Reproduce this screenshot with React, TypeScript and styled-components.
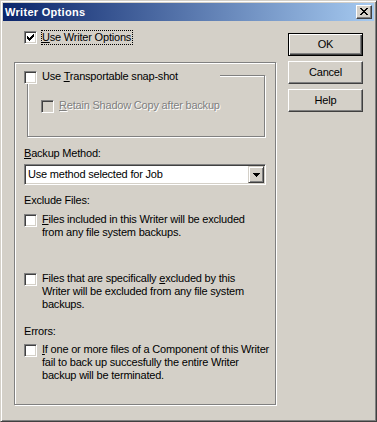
import React from "react";
import styled, { createGlobalStyle } from "styled-components";

const Global = createGlobalStyle`
  html, body { margin: 0; padding: 0; background: #d4d0c8; }
  body {
    font-family: "Liberation Sans", Arial, sans-serif;
    font-size: 11px;
    letter-spacing: -0.2px;
    color: #000;
  }
`;

const Window = styled.div`
  box-sizing: border-box;
  width: 377px;
  height: 422px;
  background: #d4d0c8;
  border: 1px solid;
  border-color: #d4d0c8 #404040 #404040 #d4d0c8;
  box-shadow: inset 1px 1px #fff, inset -1px -1px #808080;
  padding: 2px;
  display: flex;
  flex-direction: column;
`;

const TitleBar = styled.div`
  height: 18px;
  flex: none;
  background: linear-gradient(to right, #0a246a, #a6caf0);
  display: flex;
  align-items: center;
  justify-content: space-between;
  padding: 0 2px 0 2px;
`;

const TitleText = styled.span`
  color: #fff;
  font-weight: bold;
  font-size: 11px;
  letter-spacing: 0.3px;
  line-height: 13px;
`;

const CaptionButton = styled.div`
  box-sizing: border-box;
  width: 16px;
  height: 14px;
  background: #d4d0c8;
  border: 1px solid;
  border-color: #fff #404040 #404040 #fff;
  box-shadow: inset -1px -1px #808080;
  display: flex;
  padding: 2px 0 0 3px;
`;

const Body = styled.div`
  display: flex;
  padding: 9px 0 0 11px;
`;

const LeftCol = styled.div`
  width: 263px;
  display: flex;
  flex-direction: column;
`;

const RightCol = styled.div`
  margin-left: 11px;
  margin-top: 3px;
  display: flex;
  flex-direction: column;
  gap: 5px;
`;

const PushButton = styled.button<{ $default?: boolean }>`
  box-sizing: border-box;
  width: 75px;
  height: 23px;
  padding: 0;
  margin: 0;
  font-family: inherit;
  font-size: 11px;
  letter-spacing: -0.2px;
  color: #000;
  background: #d4d0c8;
  border: 1px solid;
  border-color: ${(p) => (p.$default ? "#000" : "#fff #404040 #404040 #fff")};
  box-shadow: ${(p) =>
    p.$default
      ? "inset 1px 1px #fff, inset -1px -1px #404040, inset -2px -2px #808080"
      : "inset -1px -1px #808080"};
  line-height: 13px;
`;

const TopRow = styled.div`
  display: flex;
  align-items: flex-start;
  margin-left: 10px;
`;

const FocusLabel = styled.span`
  margin-left: 4px;
  border: 1px dotted #000;
  line-height: 13px;
  padding: 0 1px 0 0;
`;

const Frame = styled.div`
  box-sizing: border-box;
  width: 262px;
  height: 343px;
  margin-top: 17px;
  border: 1px solid #808080;
  box-shadow: inset 1px 1px #fff, 1px 1px #fff;
  padding: 12px 0 0 9px;
  display: flex;
  flex-direction: column;
`;

const GroupBox = styled.div`
  position: relative;
  box-sizing: border-box;
  width: 238px;
  height: 62px;
  margin-left: 3px;
  border: 1px solid #808080;
  box-shadow: inset 1px 1px #fff, 1px 1px #fff;
  padding: 23px 0 0 13px;
`;

const Legend = styled.div`
  position: absolute;
  left: -4px;
  top: -6px;
  width: 196px;
  height: 14px;
  background: #d4d0c8;
  display: flex;
  align-items: flex-start;
`;

const CheckRow = styled.div<{ $top?: number }>`
  display: flex;
  align-items: flex-start;
  margin-top: ${(p) => p.$top ?? 0}px;
`;

const CheckText = styled.span<{ $disabled?: boolean }>`
  margin-left: 5px;
  line-height: 13px;
  color: ${(p) => (p.$disabled ? "#808080" : "#000")};
  text-shadow: ${(p) => (p.$disabled ? "1px 1px 0 #fff" : "none")};
`;

const Box = styled.span<{ $disabled?: boolean }>`
  box-sizing: border-box;
  flex: none;
  width: 13px;
  height: 13px;
  margin-top: 1px;
  border: 1px solid;
  border-color: #808080 #fff #fff #808080;
  box-shadow: inset 1px 1px #404040, inset -1px -1px #d4d0c8;
  background: ${(p) => (p.$disabled ? "#d4d0c8" : "#fff")};
  display: flex;
  padding: 2px;
`;

const FieldLabel = styled.div<{ $top: number }>`
  margin-top: ${(p) => p.$top}px;
  line-height: 13px;
`;

const Combo = styled.div`
  box-sizing: border-box;
  width: 242px;
  height: 21px;
  margin-top: 4px;
  border: 1px solid;
  border-color: #808080 #fff #fff #808080;
  box-shadow: inset 1px 1px #404040, inset -1px -1px #d4d0c8;
  background: #fff;
  padding: 1px;
  display: flex;
  align-items: center;
`;

const ComboText = styled.span`
  flex: 1;
  padding-left: 2px;
  line-height: 13px;
`;

const DropButton = styled.span`
  box-sizing: border-box;
  width: 16px;
  height: 17px;
  background: #d4d0c8;
  border: 1px solid;
  border-color: #d4d0c8 #404040 #404040 #d4d0c8;
  box-shadow: inset 1px 1px #fff, inset -1px -1px #808080;
  display: flex;
  align-items: center;
  justify-content: center;
`;

const CheckMark = () => (
  <svg width="7" height="7" viewBox="0 0 7 7" shapeRendering="crispEdges">
    <path
      fill="#000"
      d="M6 0h1v3h-1zM5 1h1v3h-1zM4 2h1v3h-1zM0 2h1v3h-1zM1 3h1v3h-1zM2 4h1v3h-1zM3 3h1v3h-1z"
    />
  </svg>
);

const CloseGlyph = () => (
  <svg width="8" height="7" viewBox="0 0 8 7" shapeRendering="crispEdges">
    <path
      fill="#000"
      d="M0 0h2v1h-2zM6 0h2v1h-2zM1 1h2v1h-2zM5 1h2v1h-2zM2 2h4v1h-4zM3 3h2v1h-2zM2 4h4v1h-4zM1 5h2v1h-2zM5 5h2v1h-2zM0 6h2v1h-2zM6 6h2v1h-2z"
    />
  </svg>
);

const DownArrow = () => (
  <svg width="7" height="4" viewBox="0 0 7 4" shapeRendering="crispEdges">
    <path fill="#000" d="M0 0h7v1h-7zM1 1h5v1h-5zM2 2h3v1h-3zM3 3h1v1h-1z" />
  </svg>
);

const Checkbox = ({ checked, disabled }: { checked?: boolean; disabled?: boolean }) => (
  <Box $disabled={disabled}>{checked && <CheckMark />}</Box>
);

export default function App() {
  return (
    <>
      <Global />
      <Window>
        <TitleBar>
          <TitleText>Writer Options</TitleText>
          <CaptionButton>
            <CloseGlyph />
          </CaptionButton>
        </TitleBar>
        <Body>
          <LeftCol>
            <TopRow>
              <Checkbox checked />
              <FocusLabel>
                <u>U</u>se Writer Options
              </FocusLabel>
            </TopRow>
            <Frame>
              <GroupBox>
                <Legend>
                  <Checkbox />
                  <CheckText>
                    Use <u>T</u>ransportable snap-shot
                  </CheckText>
                </Legend>
                <CheckRow>
                  <Checkbox disabled />
                  <CheckText $disabled>
                    <u>R</u>etain Shadow Copy after backup
                  </CheckText>
                </CheckRow>
              </GroupBox>
              <FieldLabel $top={10}>
                <u>B</u>ackup Method:
              </FieldLabel>
              <Combo>
                <ComboText>Use method selected for Job</ComboText>
                <DropButton>
                  <DownArrow />
                </DropButton>
              </Combo>
              <FieldLabel $top={9}>Exclude Files:</FieldLabel>
              <CheckRow $top={6}>
                <Checkbox />
                <CheckText>
                  <u>F</u>iles included in this Writer will be excluded
                  <br />
                  from any file system backups.
                </CheckText>
              </CheckRow>
              <CheckRow $top={33}>
                <Checkbox />
                <CheckText>
                  Files that are specifically <u>e</u>xcluded by this
                  <br />
                  Writer will be excluded from any file system
                  <br />
                  backups.
                </CheckText>
              </CheckRow>
              <FieldLabel $top={14}>Errors:</FieldLabel>
              <CheckRow $top={5}>
                <Checkbox />
                <CheckText>
                  <u>I</u>f one or more files of a Component of this Writer
                  <br />
                  fail to back up succesfully the entire Writer
                  <br />
                  backup will be terminated.
                </CheckText>
              </CheckRow>
            </Frame>
          </LeftCol>
          <RightCol>
            <PushButton $default>OK</PushButton>
            <PushButton>Cancel</PushButton>
            <PushButton>Help</PushButton>
          </RightCol>
        </Body>
      </Window>
    </>
  );
}
